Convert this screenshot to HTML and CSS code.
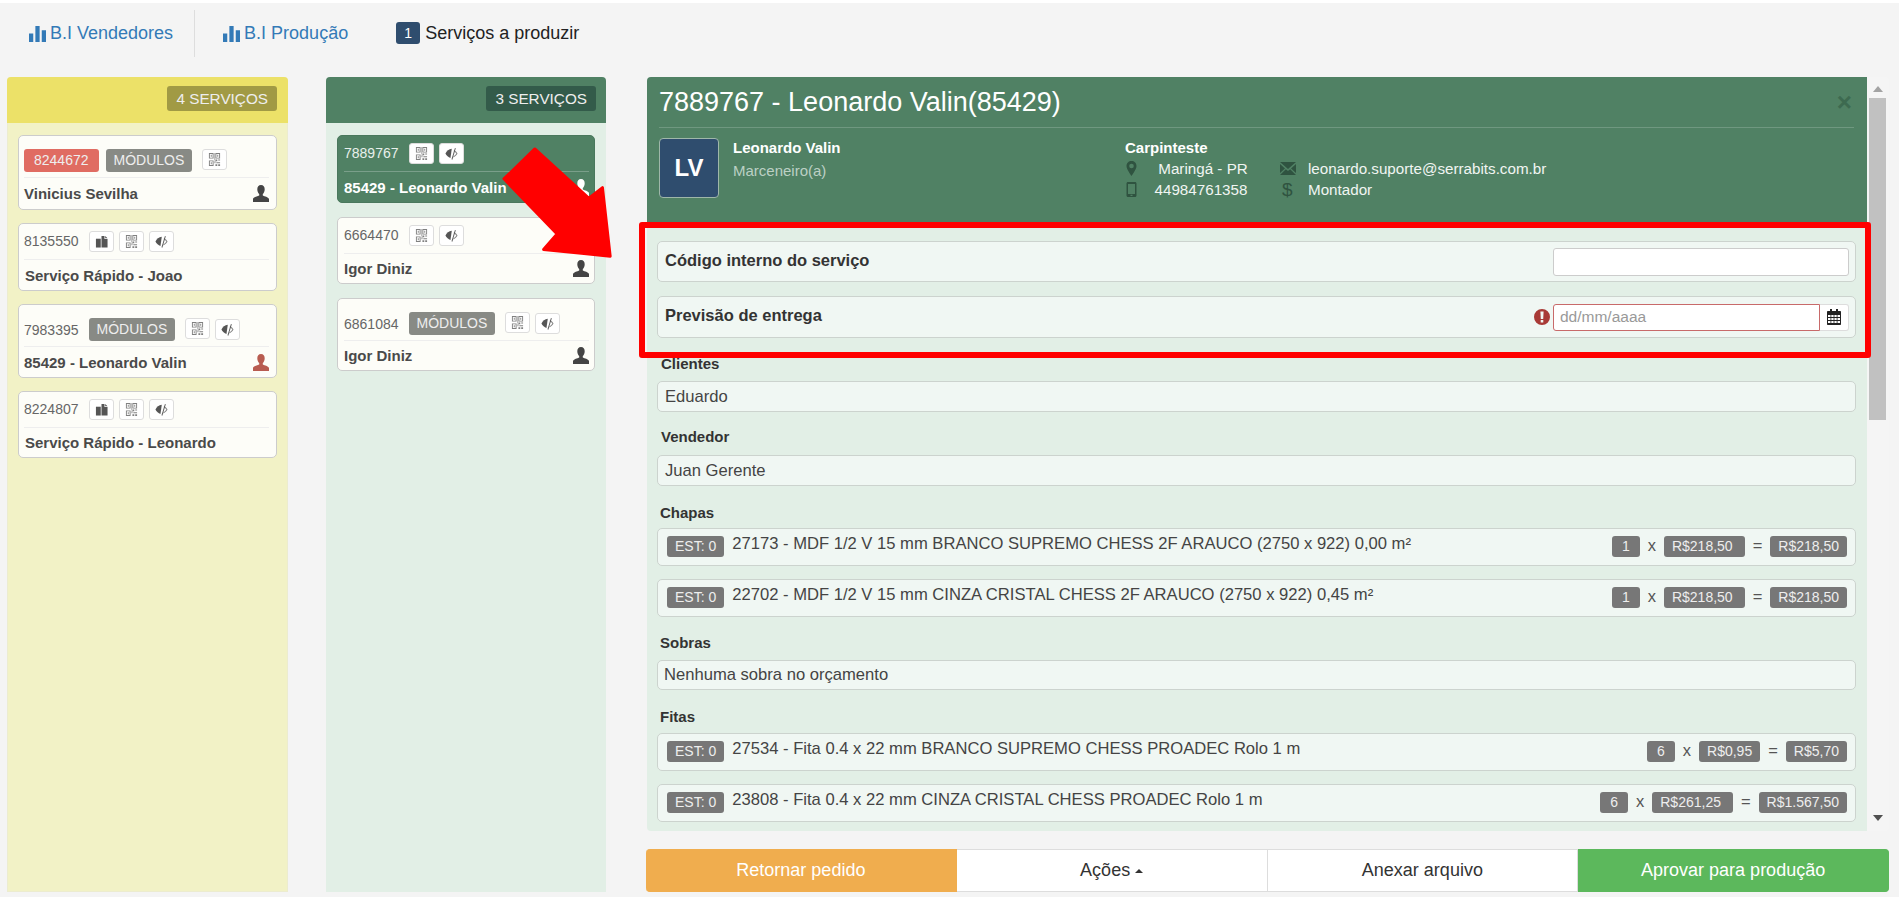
FILE: index.html
```html
<!DOCTYPE html>
<html lang="pt-BR">
<head>
<meta charset="utf-8">
<title>Serviços a produzir</title>
<link rel="stylesheet" href="styles.css">
</head>
<body>
<svg class="defs" xmlns="http://www.w3.org/2000/svg">
  <symbol id="i-bars" viewBox="0 0 16 16"><path d="M0 8h4v8H0zM6 1h4v15H6zM12 5h4v11h-4z"/></symbol>
  <symbol id="i-user" viewBox="0 0 16 17"><path d="M8 0c2.400 0 3.700 1.800 3.700 4.200 0 1.900-.8 3.800-1.900 4.800v1.400c2 .9 5.200 1.500 6.200 3.400V17H0v-3.200c1-1.900 4.200-2.500 6.200-3.400V9C5.100 8 4.300 6.100 4.300 4.200 4.300 1.800 5.600 0 8 0z"/></symbol>
  <symbol id="i-qr" viewBox="0 0 12 14"><path opacity=".75" fill-rule="evenodd" d="M0 0h5v6H0zM1 1v4h3V1zM7 0h5v6H7zM8 1v4h3V1zM2 2h1v2H2zM9 2h1v2H9zM0 8h5v6H0zM1 9v4h3V9zM2 10h1v2H2zM6 0h.6v8H6zM7 7h2v2H7zM10 7h2v1h-2zM6 9h1v2H6zM8 10h4v1H8zM7 12h2v2H7zM10 12h2v2h-2z"/></symbol>
  <symbol id="i-copy" viewBox="0 0 14 14"><path d="M1 4h5.200v9.500H1z"/><path d="M7 1h3.200v3.300h3.300v9.200H7zM11 1l2.500 2.500H11z"/></symbol>
  <symbol id="i-eye" viewBox="0 0 14 14"><path d="M7.300 2C4.300 2.200 1.700 4.500.500 7c1 2.200 3.200 4.300 5.400 4.800z"/><path d="M10.700 1l.9.400-3.700 12.200-.9-.4z"/><path opacity=".7" d="M9.700 3.300c1.700.8 3 2.200 3.800 3.700-.9 1.800-2.600 3.400-4.800 4.200l.4-1.300c1.400-.7 2.500-1.700 3.100-2.900-.6-1-1.600-1.900-2.800-2.500z"/></symbol>
  <symbol id="i-pin" viewBox="0 0 10 15"><path fill-rule="evenodd" d="M5 0c2.800 0 5 2.100 5 4.900C10 8 6.800 12 5 15 3.200 12 0 8 0 4.900 0 2.100 2.200 0 5 0zm0 2.700a2.300 2.300 0 100 4.600 2.300 2.300 0 000-4.600z"/></symbol>
  <symbol id="i-phone" viewBox="0 0 10 15"><path fill-rule="evenodd" d="M1.500 0h7C9.400 0 10 .6 10 1.500v12c0 .9-.6 1.500-1.500 1.500h-7C.6 15 0 14.400 0 13.500v-12C0 .6.600 0 1.500 0zM1.500 2v10h7V2zM4 12.800v1.200h2v-1.200z"/></symbol>
  <symbol id="i-mail" viewBox="0 0 16 13"><path d="M0 0h16L8 7zM0 2l5 4.500L0 11zM16 2v9l-5-4.500zM5.800 7.200L8 9l2.200-1.800L16 13H0z"/></symbol>
  <symbol id="i-cal" viewBox="0 0 14 16"><path fill-rule="evenodd" d="M3 0h2v2h4V0h2v2h2c.6 0 1 .4 1 1v12c0 .6-.4 1-1 1H1c-.6 0-1-.4-1-1V3c0-.6.400-1 1-1h2zM1 6v2h2.500V6zM4.300 6v2h2.300V6zM7.400 6v2h2.300V6zM10.500 6v2H13V6zM1 9v2h2.500V9zM4.300 9v2h2.300V9zM7.400 9v2h2.300V9zM10.500 9v2H13V9zM1 12v2h2.500v-2zM4.300 12v2h2.300v-2zM7.400 12v2h2.300v-2zM10.500 12v2H13v-2z"/></symbol>
  <symbol id="i-alert" viewBox="0 0 16 16"><path fill-rule="evenodd" d="M8 0a8 8 0 110 16A8 8 0 018 0zM6.400 2.500l.4 7.500h2.400l.4-7.500zM6.700 11v2.500h2.600V11z"/></symbol>
</svg>

<div class="page">
  <nav class="nav">
    <a class="nav-link"><svg class="ico-bars"><use href="#i-bars"/></svg>B.I Vendedores</a>
    <span class="nav-sep"></span>
    <a class="nav-link"><svg class="ico-bars"><use href="#i-bars"/></svg>B.I Produção</a>
    <span class="nav-current"><span class="nav-count">1</span>Serviços a produzir</span>
  </nav>

  <div class="board">
    <section class="col col-yellow">
      <header class="col-head"><span class="col-badge">4 SERVIÇOS</span></header>
      <div class="col-body">
        <article class="card card-tall">
          <div class="card-top">
            <span class="tag tag-red">8244672</span>
            <span class="tag">MÓDULOS</span>
            <span class="mini mini-after"><svg class="ico-mini"><use href="#i-qr"/></svg></span>
          </div>
          <div class="card-foot"><span class="card-name">Vinicius Sevilha</span><svg class="ico-user"><use href="#i-user"/></svg></div>
        </article>
        <article class="card">
          <div class="card-top">
            <span class="num">8135550</span>
            <span class="mini"><svg class="ico-mini"><use href="#i-copy"/></svg></span>
            <span class="mini"><svg class="ico-mini"><use href="#i-qr"/></svg></span>
            <span class="mini"><svg class="ico-mini"><use href="#i-eye"/></svg></span>
          </div>
          <div class="card-foot"><span class="card-name name-indent">Serviço Rápido - Joao</span></div>
        </article>
        <article class="card card-tall">
          <div class="card-top">
            <span class="num">7983395</span>
            <span class="tag">MÓDULOS</span>
            <span class="mini mini-after"><svg class="ico-mini"><use href="#i-qr"/></svg></span>
            <span class="mini"><svg class="ico-mini"><use href="#i-eye"/></svg></span>
          </div>
          <div class="card-foot"><span class="card-name">85429 - Leonardo Valin</span><svg class="ico-user ico-user-red"><use href="#i-user"/></svg></div>
        </article>
        <article class="card">
          <div class="card-top">
            <span class="num">8224807</span>
            <span class="mini"><svg class="ico-mini"><use href="#i-copy"/></svg></span>
            <span class="mini"><svg class="ico-mini"><use href="#i-qr"/></svg></span>
            <span class="mini"><svg class="ico-mini"><use href="#i-eye"/></svg></span>
          </div>
          <div class="card-foot"><span class="card-name name-indent">Serviço Rápido - Leonardo</span></div>
        </article>
      </div>
    </section>

    <section class="col col-green">
      <header class="col-head"><span class="col-badge">3 SERVIÇOS</span></header>
      <div class="col-body">
        <article class="card card-active">
          <div class="card-top">
            <span class="num">7889767</span>
            <span class="mini"><svg class="ico-mini"><use href="#i-qr"/></svg></span>
            <span class="mini"><svg class="ico-mini"><use href="#i-eye"/></svg></span>
          </div>
          <div class="card-foot"><span class="card-name">85429 - Leonardo Valin</span><svg class="ico-user"><use href="#i-user"/></svg></div>
        </article>
        <article class="card">
          <div class="card-top">
            <span class="num">6664470</span>
            <span class="mini"><svg class="ico-mini"><use href="#i-qr"/></svg></span>
            <span class="mini"><svg class="ico-mini"><use href="#i-eye"/></svg></span>
          </div>
          <div class="card-foot"><span class="card-name">Igor Diniz</span><svg class="ico-user"><use href="#i-user"/></svg></div>
        </article>
        <article class="card card-tall">
          <div class="card-top">
            <span class="num">6861084</span>
            <span class="tag">MÓDULOS</span>
            <span class="mini mini-after"><svg class="ico-mini"><use href="#i-qr"/></svg></span>
            <span class="mini"><svg class="ico-mini"><use href="#i-eye"/></svg></span>
          </div>
          <div class="card-foot"><span class="card-name">Igor Diniz</span><svg class="ico-user"><use href="#i-user"/></svg></div>
        </article>
      </div>
    </section>

    <div class="detail">
      <div class="panel">
        <div class="panel-main">
          <header class="panel-head">
            <div class="title-row">
              <h1 class="title">7889767 - Leonardo Valin(85429)</h1>
              <span class="close">×</span>
            </div>
            <div class="person">
              <div class="avatar">LV</div>
              <div class="who">
                <strong class="who-name">Leonardo Valin</strong>
                <span class="who-role">Marceneiro(a)</span>
              </div>
              <div class="info">
                <strong class="info-title">Carpinteste</strong>
                <div class="info-grid">
                  <svg class="ico-info"><use href="#i-pin"/></svg>
                  <span class="info-center">Maringá - PR</span>
                  <span class="info-icon"><svg class="ico-mail"><use href="#i-mail"/></svg></span>
                  <span>leonardo.suporte@serrabits.com.br</span>
                  <svg class="ico-info"><use href="#i-phone"/></svg>
                  <span class="info-center info-phone">44984761358</span>
                  <span class="info-icon info-dollar">$</span>
                  <span>Montador</span>
                </div>
              </div>
            </div>
          </header>

          <div class="panel-body">
            <div class="box box-field">
              <strong class="field-name">Código interno do serviço</strong>
              <input class="input" type="text" aria-label="Código interno do serviço">
            </div>
            <div class="box box-field box-field-2">
              <strong class="field-name">Previsão de entrega</strong>
              <svg class="ico-alert"><use href="#i-alert"/></svg>
              <div class="date-group">
                <input class="input input-date" type="text" placeholder="dd/mm/aaaa" aria-label="Previsão de entrega">
                <span class="date-addon"><svg class="ico-cal"><use href="#i-cal"/></svg></span>
              </div>
            </div>

            <h2 class="label sec-clientes">Clientes</h2>
            <div class="box box-plain">Eduardo</div>

            <h2 class="label sec-vendedor">Vendedor</h2>
            <div class="box box-plain">Juan Gerente</div>

            <h2 class="label sec-chapas">Chapas</h2>
            <div class="box box-item">
              <span class="chip chip-est">EST: 0</span>
              <span class="item-text">27173 - MDF 1/2 V 15 mm BRANCO SUPREMO CHESS 2F ARAUCO (2750 x 922) 0,00 m²</span>
              <span class="chip chip-qty">1</span><span class="op">x</span><span class="chip chip-price">R$218,50</span><span class="op">=</span><span class="chip">R$218,50</span>
            </div>
            <div class="box box-item box-next">
              <span class="chip chip-est">EST: 0</span>
              <span class="item-text">22702 - MDF 1/2 V 15 mm CINZA CRISTAL CHESS 2F ARAUCO (2750 x 922) 0,45 m²</span>
              <span class="chip chip-qty">1</span><span class="op">x</span><span class="chip chip-price">R$218,50</span><span class="op">=</span><span class="chip">R$218,50</span>
            </div>

            <h2 class="label sec-sobras">Sobras</h2>
            <div class="box box-plain box-thin">Nenhuma sobra no orçamento</div>

            <h2 class="label sec-fitas">Fitas</h2>
            <div class="box box-item">
              <span class="chip chip-est">EST: 0</span>
              <span class="item-text">27534 - Fita 0.4 x 22 mm BRANCO SUPREMO CHESS PROADEC Rolo 1 m</span>
              <span class="chip chip-qty">6</span><span class="op">x</span><span class="chip">R$0,95</span><span class="op">=</span><span class="chip">R$5,70</span>
            </div>
            <div class="box box-item box-next">
              <span class="chip chip-est">EST: 0</span>
              <span class="item-text">23808 - Fita 0.4 x 22 mm CINZA CRISTAL CHESS PROADEC Rolo 1 m</span>
              <span class="chip chip-qty">6</span><span class="op">x</span><span class="chip chip-price">R$261,25</span><span class="op">=</span><span class="chip">R$1.567,50</span>
            </div>
          </div>
        </div>
        <div class="scroll">
          <span class="arrow-up"></span>
          <span class="thumb"></span>
          <span class="arrow-down"></span>
        </div>
      </div>

      <div class="actions">
        <button class="btn btn-orange">Retornar pedido</button>
        <button class="btn">Ações <span class="caret"></span></button>
        <button class="btn">Anexar arquivo</button>
        <button class="btn btn-green">Aprovar para produção</button>
      </div>
    </div>
  </div>

  <div class="highlight"></div>
  <svg class="big-arrow" viewBox="0 0 120 120" aria-hidden="true"><path d="M35 3 91 54 105 43 113 114 44 107 58 91 3 34Z" stroke="#ff0000" stroke-width="3" stroke-linejoin="round" fill="#ff0000"/></svg>
</div>
</body>
</html>
```

FILE: styles.css
```css
* { box-sizing: border-box; }
html, body { margin: 0; background: #fff; }
body {
  padding-top: 3px;
  font-family: "Liberation Sans", Arial, sans-serif;
  color: #333;
}
.defs { display: none; }
.page {
  position: relative;
  height: 894px;
  background: #f4f4f4;
}

/* nav */
.nav {
  height: 74px;
  padding: 6px 0 20px 29px;
  display: flex;
  align-items: center;
  font-size: 18px;
}
.nav-link { color: #337ab7; display: flex; align-items: center; }
.ico-bars { width: 17px; height: 17px; margin-right: 4px; fill: #337ab7; }
.nav-sep { width: 1px; height: 47px; background: #ddd; margin: 0 28px 0 21px; }
.nav-current { margin-left: 48px; display: flex; align-items: center; color: #222; }
.nav-count {
  width: 24px; height: 22px; margin-right: 5px;
  background: #2f4d6e; color: #fff; border-radius: 3px;
  font-size: 14px; line-height: 22px; text-align: center;
}

/* board */
.board { display: flex; padding-left: 7px; height: 815px; }
.col { border-radius: 4px 4px 0 0; display: flex; flex-direction: column; }
.col-yellow { width: 281px; background: #f2f2c6; border: 1px solid #ececcf; border-top: 0; }
.col-green { width: 280px; margin-left: 38px; background: #e2efe6; }
.col-head {
  height: 46px; padding: 9px 10px 0 0;
  display: flex; justify-content: flex-end; align-items: flex-start;
  border-radius: 4px 4px 0 0;
}
.col-yellow .col-head { background: #ece168; margin: 0 -1px; padding-right: 11px; }
.col-green .col-head { background: #508164; }
.col-badge {
  height: 25px; padding: 0 9px;
  border-radius: 3px; color: #eee;
  font-size: 15.3px; line-height: 25px;
}
.col-yellow .col-badge { background: #a19a44; }
.col-green .col-badge { background: #335b4a; }

.col-body { display: flex; flex-direction: column; }
.col-yellow .col-body { padding: 12px 10px 0; gap: 13px; }
.col-green .col-body { padding: 12px 11px 0; gap: 14px; }

.card {
  height: 68px; padding: 6px 5px 0 6px;
  background: #fdfdf8;
  border: 1px solid #ccc; border-radius: 5px;
  color: #666;
  display: flex; flex-direction: column;
}
.card-tall { height: 74px; }
.col-yellow .card { padding: 6px 7px 0 5px; }
.col-yellow .card:first-child { height: 75px; }
.col-yellow .card:last-child { height: 67px; }
.col-green .card:nth-child(2) { height: 67px; }
.col-green .card:last-child { height: 73px; }
.card-active { background: #508164; border-color: #4a785d; color: #e8f0eb; }
.card-top {
  height: 30px; padding-bottom: 7px; flex: none;
  border-bottom: 1px solid #eee;
  display: flex; align-items: center; gap: 5px;
  font-size: 14px;
}
.card-tall .card-top { height: 36px; padding-top: 6px; padding-bottom: 4px; }
.card-active .card-top { border-bottom-color: #7a9f8a; }
.num { margin-right: 5px; }
.tag {
  height: 23px; padding: 0 8px; margin-right: 2px;
  background: #888a85; color: #eee;
  border-radius: 3px; line-height: 23px;
}
.tag-red { background: #e06c62; padding: 0 10px; }
.mini {
  width: 25px; height: 21px;
  background: #fff; border: 1px solid #ddd; border-radius: 3px;
  display: flex; align-items: center; justify-content: center;
}
.mini-after { margin-left: 3px; margin-bottom: 2px; }
.ico-mini { width: 13px; height: 13px; fill: #555; }
.card-foot {
  flex: 1; display: flex; align-items: center; justify-content: space-between;
}
.card-name { font-size: 15px; font-weight: 700; color: #4a4a4a; white-space: nowrap; }
.card-active .card-name { color: #fff; }
.name-indent { padding-left: 1px; }
.ico-user { width: 16px; height: 17px; fill: #444; }
.card-active .ico-user { fill: #fff; }
.ico-user-red { fill: #b85c50; }

/* detail */
.detail { width: 1242px; margin-left: 41px; display: flex; flex-direction: column; }
.panel { height: 754px; display: flex; }
.panel-main { width: 1220px; background: #e2efe6; border-radius: 4px 0 0 4px; overflow: hidden; }
.panel-head { height: 146px; background: #508164; padding: 0 13px 0 12px; color: #fff; }
.title-row {
  height: 51px; border-bottom: 1px solid #6f9880;
  display: flex; align-items: center; justify-content: space-between;
}
.title { margin: 0; font-size: 27px; font-weight: 400; line-height: 50px; }
.close { font-size: 26px; font-weight: 700; color: #3d6a50; margin-right: 2px; }
.person { display: flex; margin-top: 10px; }
.avatar {
  width: 60px; height: 60px; flex: none;
  background: #2f4d6e; border: 1px solid #9fb7a9; border-radius: 4px;
  color: #fff; font-size: 24px; font-weight: 700; text-align: center; line-height: 58px;
}
.who { width: 392px; margin-left: 14px; display: flex; flex-direction: column; font-size: 15px; }
.who-name { line-height: 20px; }
.who-role { margin-top: 3px; line-height: 20px; color: #bcd0c4; }
.info { font-size: 15.2px; }
.info-title { display: block; line-height: 20px; font-size: 15px; }
.info-grid {
  display: grid; grid-template-columns: 25px 106px 52px auto;
  grid-auto-rows: 21px; align-items: center; color: #f0f5f2;
}
.ico-info { width: 11px; height: 15px; margin-left: 1px; fill: #2f5340; }
.info-center { text-align: center; }
.info-phone { margin-left: -4px; }
.info-icon { padding-left: 24px; display: flex; align-items: center; }
.ico-mail { width: 16px; height: 13px; fill: #2f5340; }
.info-dollar { padding-left: 26px; color: #2f5340; font-size: 19px; }

.panel-body { padding: 18px 11px 0 10px; }
.box {
  background: #f0f7f3; border: 1px solid #ccd3ce; border-radius: 5px;
  font-size: 16.6px; color: #444;
}
.box-field {
  height: 41px; padding: 0 6px;
  display: flex; align-items: center;
}
.box-field-2 { height: 42px; margin-top: 14px; }
.field-name { font-size: 16.5px; color: #333; margin: 0 auto 3px 0; padding-left: 1px; }
.input {
  width: 296px; height: 28px; padding: 0 6px;
  background: #fff; border: 1px solid #ccc; border-radius: 3px;
  font: 15.5px "Liberation Sans", Arial, sans-serif; color: #555;
}
.input::placeholder { color: #999; opacity: 1; }
.ico-alert { width: 16px; height: 16px; margin-right: 3px; fill: #a83a36; }
.date-group { display: flex; width: 296px; }
.input-date { width: 267px; height: 27px; border-color: #c86a6a; border-radius: 3px 0 0 3px; }
.date-addon {
  width: 29px; height: 27px; background: #fff;
  border: 1px solid #ddd; border-left: 0; border-radius: 0 3px 3px 0;
  display: flex; align-items: center; justify-content: center;
}
.ico-cal { width: 14px; height: 16px; fill: #222; }

.label { margin: 0; height: 20px; font-size: 15px; line-height: 20px; font-weight: 700; color: #333; padding-left: 3px; }
.sec-clientes { margin: 16px 0 7px; padding-left: 4px; }
.sec-vendedor { margin: 15px 0 8px; padding-left: 4px; }
.sec-chapas { margin: 17px 0 5px; }
.sec-sobras { margin: 16px 0 7px; }
.sec-fitas { margin: 17px 0 6px; }
.box-plain { height: 31px; padding: 0 6px 0 7px; line-height: 29px; }
.box-thin { height: 30px; line-height: 28px; padding-left: 6px; }
.box-item {
  height: 38px; padding: 7px 8px 0 9px;
  display: flex; align-items: flex-start; gap: 8px;
}
.box-next { margin-top: 13px; }
.chip {
  height: 21px; padding: 0 8px;
  background: #777; color: #eee; border-radius: 3px;
  font-size: 14px; line-height: 21px; white-space: nowrap;
}
.chip-est { padding: 0 8px; }
.chip-qty { padding: 0 10px; }
.chip-price { padding-right: 12px; }
.item-text { flex: 1; line-height: 16px; padding-top: 0; white-space: nowrap; }
.op { font-size: 16.5px; line-height: 18px; color: #555; }

.scroll {
  width: 22px; padding: 9px 3px 10px 2px;
  background: #f5f5f5; border-radius: 0 4px 4px 0;
  display: flex; flex-direction: column; align-items: center;
}
.arrow-up { width: 0; height: 0; border: 5px solid transparent; border-top: 0; border-bottom: 6px solid #a3a3a3; }
.arrow-down { width: 0; height: 0; margin-top: auto; border: 5px solid transparent; border-bottom: 0; border-top: 6px solid #505050; }
.thumb { width: 17px; height: 322px; margin-top: 6px; background: #c1c1c1; }

.actions { height: 43px; margin-top: 18px; margin-left: -1px; display: flex; }
.btn {
  flex: 1; height: 43px; padding: 0;
  background: #fff; border: 1px solid #ddd; border-left-width: 0;
  font: 18px "Liberation Sans", Arial, sans-serif; color: #333;
}
.btn-orange { background: #f0ad4e; border-color: #f0ad4e; color: #fff; border-radius: 4px 0 0 4px; }
.btn-green { background: #5cb85c; border-color: #5cb85c; color: #fff; border-radius: 0 4px 4px 0; }
.caret {
  display: inline-block; width: 0; height: 0; vertical-align: 3px;
  border: 4px solid transparent; border-top: 0; border-bottom: 4px solid #333;
}

/* annotation over the screenshot */
.highlight {
  position: absolute; left: 639px; top: 219px; width: 1232px; height: 136px;
  border: 6px solid #ff0000; border-radius: 3px;
}
.big-arrow { position: absolute; left: 501px; top: 143px; width: 116px; height: 116px; }
```
